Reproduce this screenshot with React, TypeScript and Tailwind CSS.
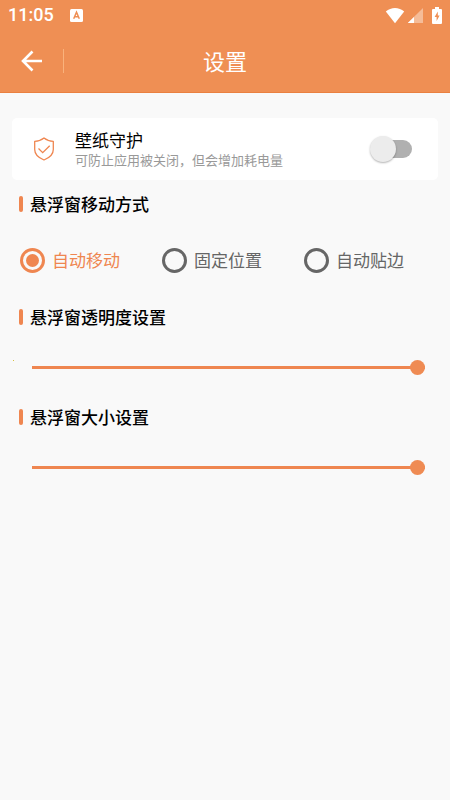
import { useState, type CSSProperties } from "react";

const moveModes = [
  { value: "auto", label: "自动移动" },
  { value: "fixed", label: "固定位置" },
  { value: "edge", label: "自动贴边" },
];

function StatusBar() {
  return (
    <div className="flex h-[30px] items-center justify-between pr-2 pl-2">
      <div className="flex items-center gap-4">
        <span className="font-[Roboto] text-[18px] leading-6 font-medium">11:05</span>
        <svg width="13" height="13" viewBox="0 0 13 13" aria-hidden="true">
          <rect width="13" height="13" rx="1.5" fill="#fff" />
          <path
            d="M3.7 9.8 6.5 3.2 9.3 9.8M4.7 7.8h3.6"
            fill="none"
            stroke="#ef8f54"
            strokeWidth="1.5"
          />
        </svg>
      </div>
      <div className="flex items-center">
        <svg width="20" height="17" viewBox="0 0 20 17" aria-hidden="true">
          <path d="M.8 4.6C6-.3 14-.3 19.2 4.6L10 16.2Z" fill="#fff" />
        </svg>
        <svg className="ml-[2px]" width="17" height="17" viewBox="0 0 17 17" aria-hidden="true">
          <path d="M16 1v15H.8Z" fill="#fff" opacity=".4" />
          <path d="M7 10v6H.8Z" fill="#fff" />
        </svg>
        <svg className="ml-2" width="10" height="17" viewBox="0 0 10 17" aria-hidden="true">
          <path d="M3 0h4v2h2a1 1 0 0 1 1 1v13a1 1 0 0 1-1 1H1a1 1 0 0 1-1-1V3a1 1 0 0 1 1-1h2Z" fill="#fff" />
          <path d="M5.8 4.5 2.6 10h2v4l3-5.400H5.800Z" fill="#ef8f54" />
        </svg>
      </div>
    </div>
  );
}

function SectionTitle({ id, children }: { id: string; children: string }) {
  return (
    <h2 id={id} className="flex h-6 items-center gap-[7px] pl-[7px] text-[17px] leading-6 font-medium text-black">
      <span className="h-4 w-1 rounded-full bg-[#ef8650]" />
      {children}
    </h2>
  );
}

function Slider({
  labelledBy,
  value,
  onChange,
}: {
  labelledBy: string;
  value: number;
  onChange: (value: number) => void;
}) {
  return (
    <div className="mt-[26px] flex h-6 items-center pr-[13px] pl-5">
      <input
        type="range"
        min={0}
        max={100}
        value={value}
        aria-labelledby={labelledBy}
        onChange={(event) => onChange(Number(event.target.value))}
        style={{ "--fill": `${value}%` } as CSSProperties}
        className="h-6 w-full cursor-pointer appearance-none bg-transparent [&::-webkit-slider-runnable-track]:h-[3px] [&::-webkit-slider-runnable-track]:bg-[linear-gradient(to_right,#ef8650_var(--fill),#d0d0d0_var(--fill))] [&::-webkit-slider-thumb]:-mt-[6px] [&::-webkit-slider-thumb]:size-[15px] [&::-webkit-slider-thumb]:appearance-none [&::-webkit-slider-thumb]:rounded-full [&::-webkit-slider-thumb]:bg-[#ef8b53]"
      />
    </div>
  );
}

export default function App() {
  const [guard, setGuard] = useState(false);
  const [mode, setMode] = useState("auto");
  const [opacity, setOpacity] = useState(100);
  const [size, setSize] = useState(100);

  return (
    <div className="min-h-screen bg-[#f9f9f9] font-['Noto_Sans_CJK_SC',sans-serif]">
      <header className="border-b border-[#ea8040] bg-[#ef8f54] pb-[2px] text-white">
        <StatusBar />
        <div className="grid h-[60px] grid-cols-[1fr_auto_1fr] items-center">
          <div className="flex items-center gap-[19px] pt-[2px] pl-5">
            <button type="button" aria-label="返回" className="cursor-pointer">
              <svg width="24" height="24" viewBox="0 0 24 24" fill="none" aria-hidden="true">
                <path d="M22 12H4M12.5 2.500 3 12l9.500 9.500" stroke="#fff" strokeWidth="2.600" />
              </svg>
            </button>
            <span className="h-6 w-px bg-[#f9b27c]" />
          </div>
          <h1 className="text-[22px] leading-8">设置</h1>
        </div>
      </header>

      <main className="px-3">
        <section className="mt-[25px] flex h-[62px] items-center rounded-[5px] bg-white pr-[26px] pl-[21px]">
          <svg width="22" height="24" viewBox="0 0 22 24" fill="none" stroke="#ef8650" strokeWidth="1.300" aria-hidden="true">
            <path d="M11 1C8.500 3 5 4.200 1.700 4.300V12.500C1.700 17.500 6 21 11 23c5-2 9.300-5.500 9.300-10.500V4.300C17 4.200 13.500 3 11 1Z" strokeLinejoin="round" />
            <path d="m5.500 11.500 4.200 4.200 7-7" />
          </svg>
          <label htmlFor="guard" className="ml-5 flex-1 cursor-pointer pb-[2px]">
            <span className="block text-[17px] leading-6 text-black">壁纸守护</span>
            <span className="block text-[13px] leading-4 text-[#999]">可防止应用被关闭，但会增加耗电量</span>
          </label>
          <input
            id="guard"
            type="checkbox"
            role="switch"
            checked={guard}
            onChange={(event) => setGuard(event.target.checked)}
            className="relative h-[18px] w-[38px] cursor-pointer appearance-none rounded-full bg-[#b0b0b0] before:absolute before:-top-1 before:-left-1 before:size-[26px] before:rounded-full before:bg-[#ececec] before:shadow-[0_1px_2px_rgba(0,0,0,0.3)] checked:bg-[#f6c3a4] checked:before:left-4 checked:before:bg-[#ef8650]"
          />
        </section>

        <section className="mt-3">
          <SectionTitle id="mode-title">悬浮窗移动方式</SectionTitle>
          <div role="radiogroup" aria-labelledby="mode-title" className="mt-8 grid grid-cols-3">
            {moveModes.map((item) => (
              <label
                key={item.value}
                className="flex h-6 cursor-pointer items-center gap-[7px] pl-2 text-[17px] leading-6 text-[#666] has-checked:text-[#ef8650]"
              >
                <input
                  type="radio"
                  name="mode"
                  value={item.value}
                  checked={mode === item.value}
                  onChange={() => setMode(item.value)}
                  className="grid size-[25px] appearance-none place-items-center rounded-full border-[3px] border-[#666] before:size-[13px] before:rounded-full checked:border-[#ef8650] checked:before:bg-[#ef8650]"
                />
                {item.label}
              </label>
            ))}
          </div>
        </section>

        <section className="relative mt-[33px]">
          <SectionTitle id="opacity-title">悬浮窗透明度设置</SectionTitle>
          <span className="absolute bottom-[18px] left-px size-px bg-[#d8c040]" />
          <Slider labelledBy="opacity-title" value={opacity} onChange={setOpacity} />
        </section>

        <section className="mt-[26px]">
          <SectionTitle id="size-title">悬浮窗大小设置</SectionTitle>
          <Slider labelledBy="size-title" value={size} onChange={setSize} />
        </section>
      </main>
    </div>
  );
}
